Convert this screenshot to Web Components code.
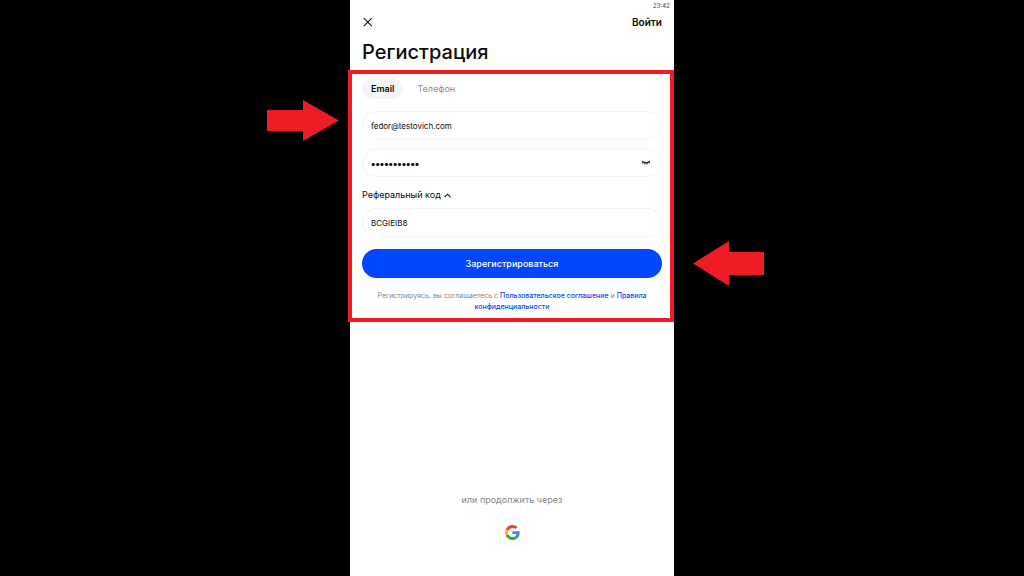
<!DOCTYPE html>
<html lang="ru">
<head>
<meta charset="utf-8">
<meta name="viewport" content="width=device-width, initial-scale=1">
<title>Регистрация</title>
<style>
  body { margin: 0; background: #000; font-family: Inter, "Noto Sans", sans-serif; color: #0b0b0b; }
</style>
</head>
<body>
<signup-screen>
  <status-bar slot="top">23:42</status-bar>
  <screen-header slot="top" heading="Регистрация" action="Войти"></screen-header>
  <step-highlight>
    <signup-form></signup-form>
  </step-highlight>
  <social-login slot="bottom">или продолжить через</social-login>
</signup-screen>

<script>
const define = (name, html, setup) => {
  const template = document.createElement('template');
  template.innerHTML = html;
  customElements.define(name, class extends HTMLElement {
    constructor() {
      super();
      this.attachShadow({ mode: 'open' }).append(template.content.cloneNode(true));
    }
    connectedCallback() { if (setup) setup(this, this.shadowRoot); }
  });
};

define('signup-screen', `
  <style>
    :host { display: flex; justify-content: center; min-height: 100vh; }
    main { box-sizing: border-box; width: 100%; max-width: 324px; background: #fff; display: flex; flex-direction: column; }
    footer { margin-top: auto; padding: 24px 12px 29px; }
  </style>
  <main>
    <slot name="top"></slot>
    <slot></slot>
    <footer><slot name="bottom"></slot></footer>
  </main>`);

define('status-bar', `
  <style>
    :host { display: block; padding: 0 4px; text-align: right; font-size: 6px; line-height: 11px; font-weight: 500; color: #555; }
  </style>
  <slot></slot>`);

define('screen-header', `
  <style>
    :host { display: block; padding: 0 12px 4px; }
    nav { display: flex; justify-content: space-between; align-items: center; height: 22px; }
    button { display: flex; padding: 0 1px; border: 0; background: none; color: inherit; }
    svg { width: 10px; height: 10px; }
    a { color: inherit; text-decoration: none; font-size: 10px; line-height: 12px; font-weight: 600; }
    h1 { margin: 5px 0 0; font-size: 20px; line-height: 28px; font-weight: 500; }
  </style>
  <nav>
    <button type="button" aria-label="Закрыть">
      <svg viewBox="0 0 10 10" fill="none" stroke="#111" stroke-width="1.1"><path d="M.8 1.2l8 8M8.8 1.2L.8 9.2"/></svg>
    </button>
    <a href="#login"></a>
  </nav>
  <h1></h1>`, (host, root) => {
  root.querySelector('h1').textContent = host.getAttribute('heading');
  root.querySelector('a').textContent = host.getAttribute('action');
});

/* Red frame round the step, with an arrow on either side of it. */
define('step-highlight', `
  <style>
    :host { display: block; position: relative; padding: 8px 12px 10px; --mark: #ee1c25; }
    .frame { position: absolute; inset: 0 0 0 -2px; border: 4px solid var(--mark); pointer-events: none; }
    svg { position: absolute; fill: var(--mark); }
    .left { right: calc(100% + 11px); top: 30px; width: 72px; height: 41px; }
    .right { left: calc(100% + 19px); top: 171px; width: 71px; height: 45px; }
  </style>
  <slot></slot>
  <div class="frame"></div>
  <svg class="left" viewBox="0 0 72 41"><path d="M0 10h36V0l36 20.5L36 41V31H0z"/></svg>
  <svg class="right" viewBox="0 0 71 45"><path d="M71 11H36V0L0 22.5 36 45V34h35z"/></svg>`);

define('tab-switch', `
  <style>
    :host { display: block; }
    [role="tablist"] { display: flex; gap: 5px; }
    button { border: 0; border-radius: 11px; height: 21px; padding: 0 9px; background: none; font: 400 9px/12px Inter, sans-serif; color: #8c8c8c; }
    button[aria-selected="true"] { background: #f4f5f6; color: #0b0b0b; font-weight: 600; }
  </style>
  <div role="tablist">
    <button type="button" role="tab" aria-selected="true">Email</button>
    <button type="button" role="tab" aria-selected="false">Телефон</button>
  </div>`, (host, root) => {
  const tabs = [...root.querySelectorAll('button')];
  tabs.forEach(tab => tab.onclick = () => tabs.forEach(t => t.setAttribute('aria-selected', t === tab)));
});

define('text-field', `
  <style>
    :host { display: flex; align-items: center; box-sizing: border-box; height: 29px; padding: 0 8px; border: 1px solid #f3f3f4; border-radius: 15px; }
    input { flex: 1; min-width: 0; border: 0; padding: 0; outline: 0; background: none; color: #0b0b0b; font: 400 8px/12px Inter, sans-serif; }
    input[type="password"] { font-size: 10px; font-weight: 800; }
    slot { display: flex; }
  </style>
  <input>
  <slot></slot>`, (host, root) => {
  const input = root.querySelector('input');
  input.type = host.getAttribute('type') || 'text';
  input.value = host.getAttribute('value');
  input.setAttribute('aria-label', host.getAttribute('label'));
});

define('reveal-toggle', `
  <style>
    :host { display: flex; padding-right: 2px; }
    button { display: flex; border: 0; padding: 0; background: none; }
    svg { width: 10px; height: 6px; }
  </style>
  <button type="button" aria-label="Показать пароль">
    <svg viewBox="0 0 10 6" fill="none" stroke="#151515" stroke-width="1.1"><path d="M1.2 1.2Q5 4.4 8.8 1.2M2.3 2.2L1.2 3.4M4.1 3L3.8 4.4M5.9 3L6.2 4.4M7.7 2.2L8.8 3.4"/></svg>
  </button>`);

define('signup-form', `
  <style>
    :host { display: block; }
    form { display: flex; flex-direction: column; margin: 0; }
    .fields { display: flex; flex-direction: column; gap: 8px; margin: 12px 0; }
    .referral { display: flex; align-items: center; align-self: flex-start; gap: 3px; border: 0; padding: 0; margin-bottom: 7px; background: none; color: inherit; font: 400 9px/12px Inter, sans-serif; }
    .referral svg { width: 7px; height: 5px; }
    .submit { margin: 12px 0; height: 29px; border: 0; border-radius: 15px; background: #0047ff; color: #fff; font: 500 9px/12px Inter, sans-serif; }
    p { margin: 0; padding: 0 8px; text-align: center; font-size: 7px; line-height: 11px; color: #858585; }
    a { color: #0047ff; text-decoration: none; font-weight: 500; }
  </style>
  <form>
    <tab-switch></tab-switch>
    <div class="fields">
      <text-field type="email" label="Email" value="fedor@testovich.com"></text-field>
      <text-field type="password" label="Пароль" value="testovich12"><reveal-toggle></reveal-toggle></text-field>
    </div>
    <button class="referral" type="button" aria-expanded="true">Реферальный код
      <svg viewBox="0 0 7 5" fill="none" stroke="#111" stroke-width="1.1"><path d="M.5 4.2l3-3 3 3"/></svg>
    </button>
    <text-field label="Реферальный код" value="BCGIEIB8"></text-field>
    <button class="submit" type="button">Зарегистрироваться</button>
    <p><span>Регистрируясь, вы соглашаетесь с</span> <a href="#terms">Пользовательское соглашение</a> <span>и</span> <a href="#privacy"><span>Правила</span> <span>конфиденциальности</span></a></p>
  </form>`);

define('social-login', `
  <style>
    :host { display: flex; flex-direction: column; align-items: center; gap: 12px; font-size: 9px; line-height: 12px; color: #858585; }
    button { box-sizing: border-box; display: flex; align-items: center; justify-content: center; width: 29px; height: 29px; padding: 0; border: 1px solid #f3f3f4; border-radius: 50%; background: #fff; }
    svg { width: 15px; height: 15px; }
  </style>
  <slot></slot>
  <button type="button" aria-label="Google">
    <svg viewBox="0 0 48 48">
      <path fill="#EA4335" d="M24 9.5c3.54 0 6.71 1.22 9.21 3.6l6.85-6.85C35.9 2.38 30.47 0 24 0 14.62 0 6.51 5.38 2.56 13.22l7.98 6.19C12.43 13.72 17.74 9.5 24 9.5z"/>
      <path fill="#4285F4" d="M46.98 24.55c0-1.57-.15-3.09-.38-4.55H24v9.02h12.94c-.58 2.96-2.26 5.48-4.78 7.18l7.73 6c4.51-4.18 7.09-10.36 7.09-17.65z"/>
      <path fill="#FBBC05" d="M10.53 28.59c-.48-1.45-.76-2.99-.76-4.59s.27-3.14.76-4.59l-7.98-6.19C.92 16.46 0 20.12 0 24c0 3.88.92 7.54 2.56 10.78l7.97-6.19z"/>
      <path fill="#34A853" d="M24 48c6.48 0 11.93-2.13 15.89-5.81l-7.73-6c-2.15 1.45-4.92 2.3-8.16 2.3-6.26 0-11.57-4.22-13.47-9.91l-7.98 6.19C6.51 42.62 14.62 48 24 48z"/>
    </svg>
  </button>`);
</script>
</body>
</html>
